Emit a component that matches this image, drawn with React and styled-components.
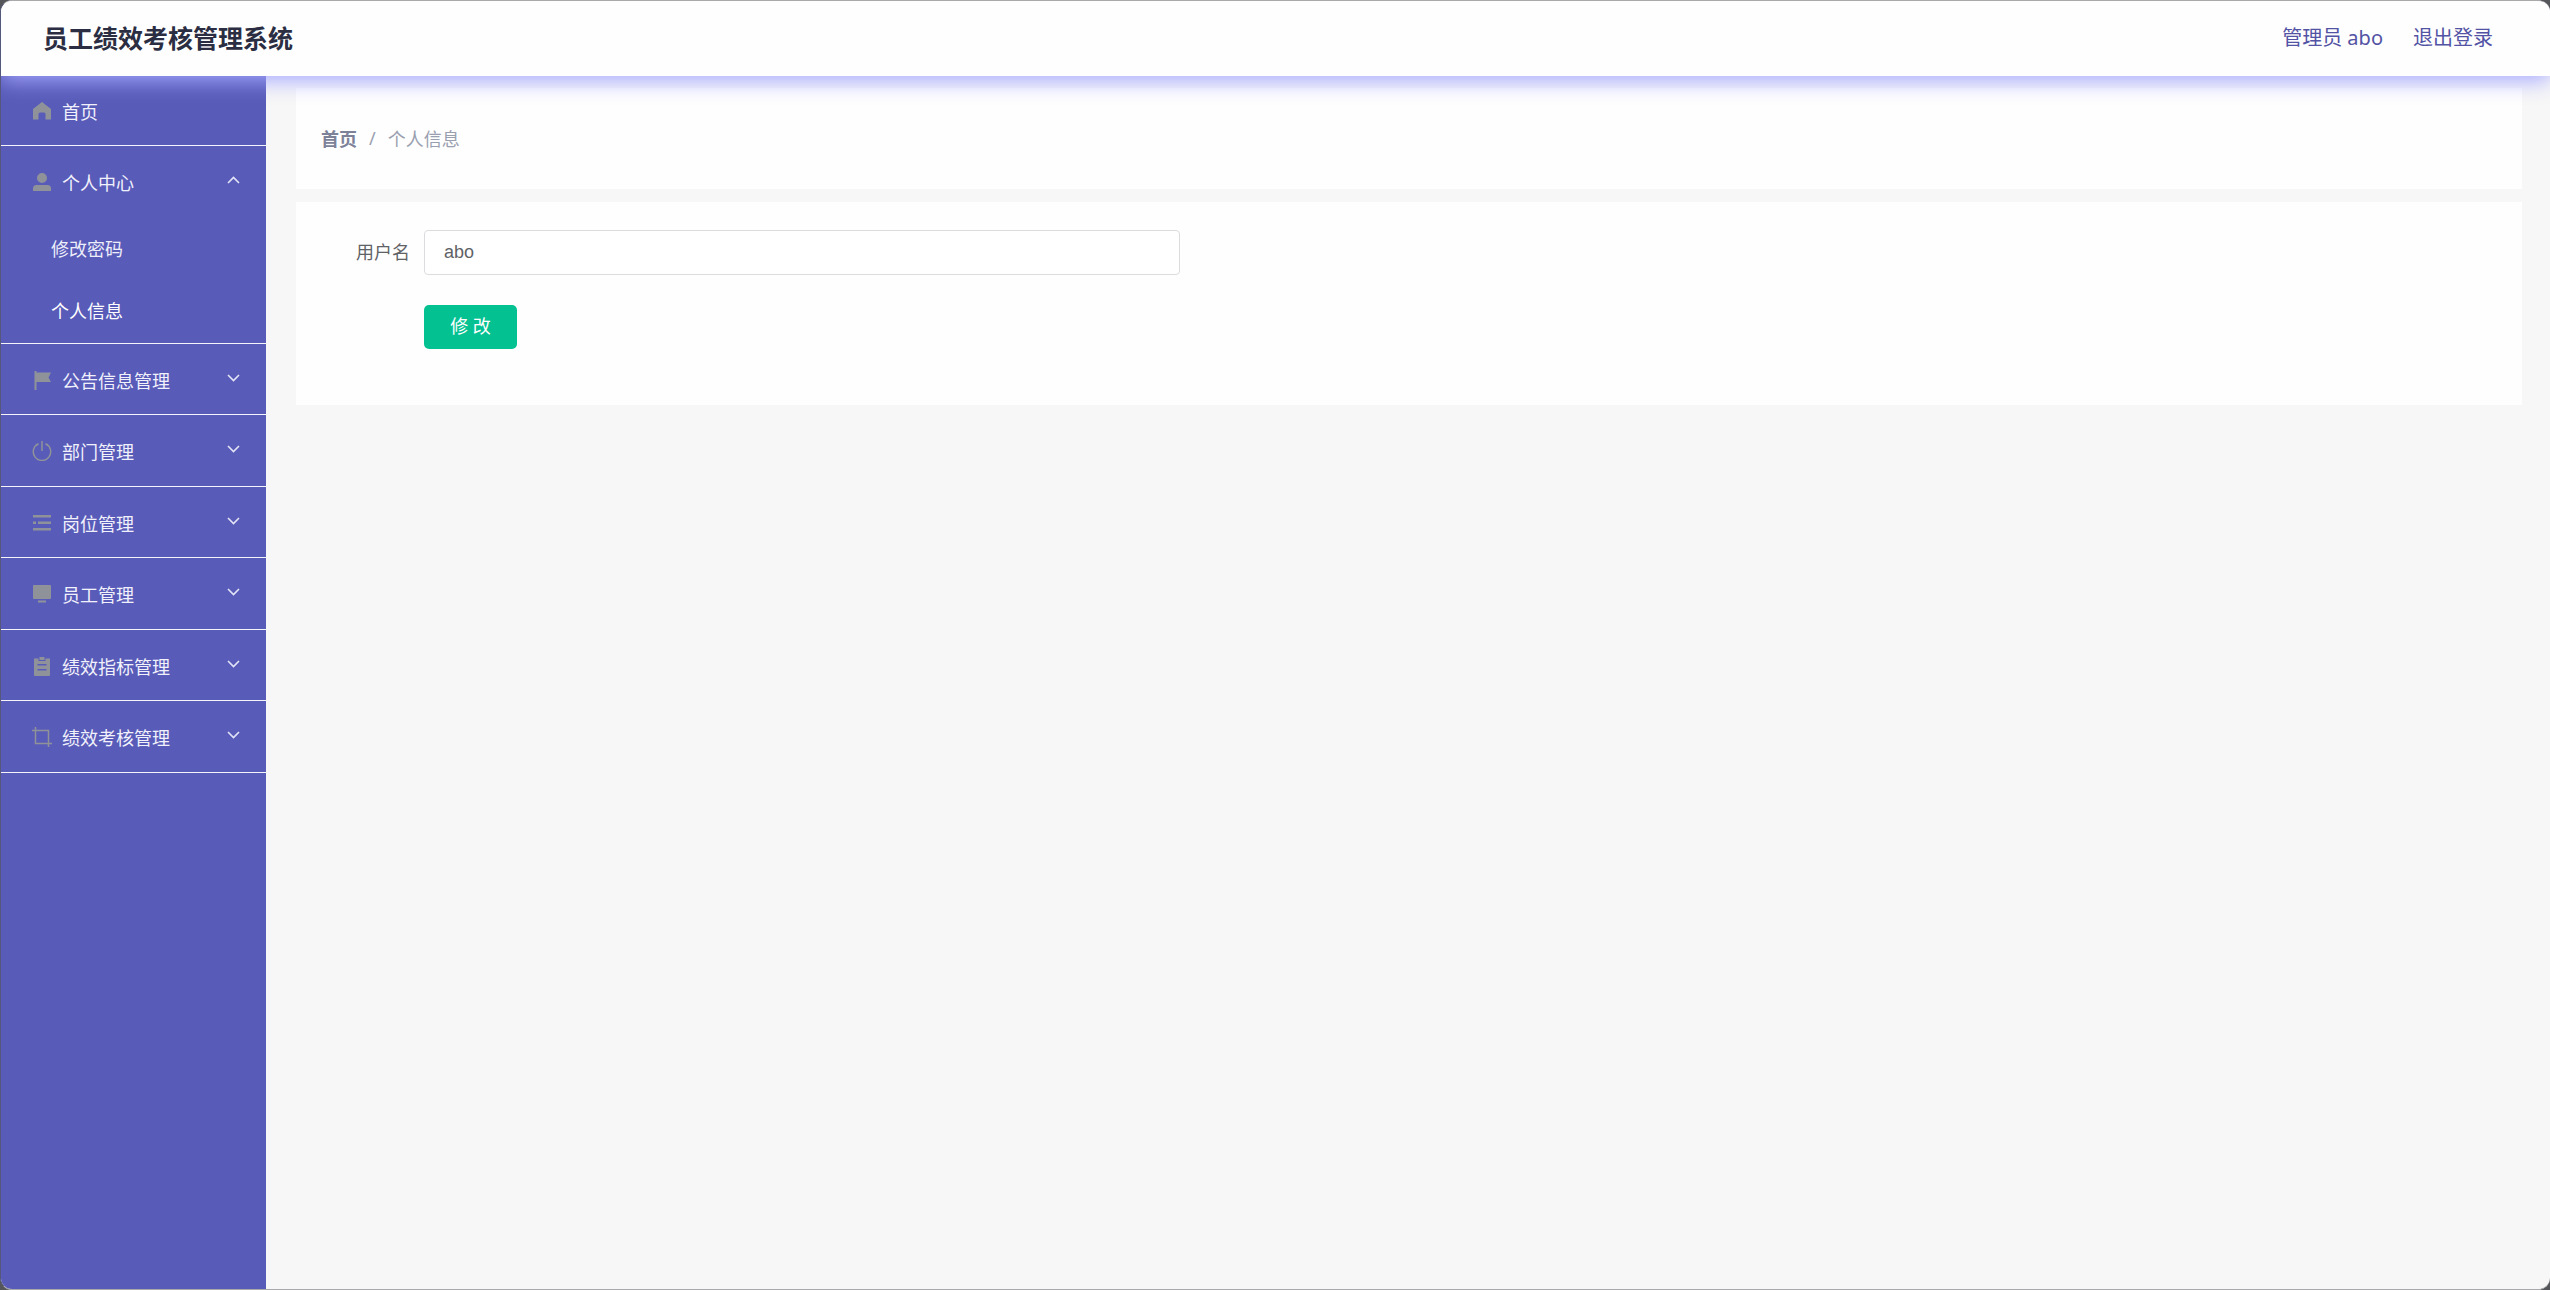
import React, { useState } from 'react';
import styled, { createGlobalStyle } from 'styled-components';

const GlobalStyle = createGlobalStyle`
	* {
		box-sizing: border-box;
	}

	body {
		margin: 0;
		background: #55565a;
		font-family: 'Noto Sans', 'Noto Sans CJK SC', sans-serif;
		font-size: 18px;
		color: #606266;
	}
`;

// Styled Components
const Page = styled.div`
	display: flex;
	flex-direction: column;
	min-height: 100vh;
	border: 1px solid #a9a9ab;
	border-left-color: #55587c;
	border-right: 0;
	border-radius: 12px;
	overflow: hidden;
	background: #f7f7f7;
`;

const Header = styled.header`
	position: relative;
	z-index: 1;
	display: flex;
	align-items: center;
	justify-content: space-between;
	height: 75px;
	padding: 0 57px 1px 42px;
	background: #fefefe;
	box-shadow: 0 5px 20px rgba(165, 168, 255, 0.95);
`;

const Title = styled.h1`
	margin: 0;
	font-size: 25px;
	font-weight: 700;
	line-height: 36px;
	color: #2b2d42;
`;

const UserNav = styled.nav`
	display: flex;
	gap: 30px;
`;

const UserLink = styled.a`
	font-size: 20px;
	line-height: 30px;
	color: #5353a5;
	text-decoration: none;
`;

const Body = styled.div`
	display: flex;
	flex: 1;
`;

const Sidebar = styled.aside`
	flex: none;
	width: 265px;
	background: #585bb8;
`;

const MenuList = styled.ul`
	margin: 0;
	padding: 0;
	list-style: none;
`;

const MenuItem = styled.li`
	border-bottom: 1px solid #f4f4fb;
`;

const MenuButton = styled.button`
	display: flex;
	align-items: center;
	gap: 10px;
	width: 100%;
	height: ${props => props.$height || 70}px;
	padding: 1px 26px 0 31px;
	border: 0;
	background: none;
	font: inherit;
	color: #f1f1fb;
	text-align: left;
	cursor: pointer;
`;

const MenuIcon = styled.svg`
	flex: none;
	width: 20px;
	height: 20px;
	fill: #8f9399;
`;

const MenuLabel = styled.span`
	flex: 1;
`;

const Arrow = styled.svg`
	width: 13px;
	height: 8px;
	margin-bottom: 4px;
	fill: none;
	stroke: #e4e4f7;
	stroke-width: 1.6;
	transform: ${props => (props.$open ? 'rotate(180deg)' : 'none')};
`;

const SubMenu = styled.div`
	padding-bottom: 2px;
`;

const SubLink = styled.a`
	display: flex;
	align-items: center;
	height: 62px;
	padding-left: 50px;
	color: ${props => (props.$active ? '#ffffff' : '#eeeefa')};
	text-decoration: none;
`;

const Content = styled.main`
	flex: 1;
	padding: 12px 28px 12px 30px;
`;

const Panel = styled.section`
	margin-bottom: 13px;
	background: #fefefe;
`;

const Breadcrumb = styled(Panel)`
	display: flex;
	align-items: center;
	gap: 12px;
	height: 101px;
	padding: 0 25px 2px;
	color: #9a9fb0;
`;

const CrumbLink = styled.a`
	font-weight: 700;
	color: #7d8299;
	text-decoration: none;
`;

const Form = styled.form`
	display: flex;
	flex-direction: column;
	gap: 30px;
	padding: 28px 40px 56px 25px;
`;

const Field = styled.div`
	display: flex;
	align-items: center;
`;

const Label = styled.label`
	width: 103px;
	padding: 0 14px 4px 0;
	text-align: right;
`;

const TextInput = styled.input`
	width: 35%;
	height: 45px;
	padding: 0 19px;
	border: 1px solid #dcdcdf;
	border-radius: 4px;
	background: #ffffff;
	font-family: 'Liberation Sans', sans-serif;
	font-size: 18px;
	color: #606266;
`;

const SubmitButton = styled.button`
	width: 93px;
	height: 44px;
	margin-left: 103px;
	padding: 0 0 5px;
	border: 0;
	border-radius: 5px;
	background: #04c192;
	font: inherit;
	color: #ffffff;
	cursor: pointer;
`;

const icons = {
	home: <path d='M10 1 19 8v10.500h-5.500V13a1.500 1.500 0 0 0-1.500-1.500H8A1.500 1.500 0 0 0 6.500 13v5.500H1V8z' />,
	user: <path d='M10 1a5 5 0 1 1 0 10 5 5 0 0 1 0-10zM1 19v-2.500A3.500 3.500 0 0 1 4.500 13h11a3.500 3.500 0 0 1 3.500 3.500V19z' />,
	flag: <path d='M2.500 1h2v1.500H19L16.500 7.500 19 12H4.500v8h-2z' />,
	power: (
		<path
			d='M6.500 2.800a8.700 8.700 0 1 0 7 0M10 0v10'
			fill='none'
			stroke='#8f9399'
			strokeWidth='1.5'
		/>
	),
	list: <path d='M1 2h18v2.500H1zM1 8.500h3v2.500H1zM6 8.500h13v2.500H6zM1 15h18v2.500H1z' />,
	platform: <path d='M2 1h16a1 1 0 0 1 1 1v12a1 1 0 0 1-1 1H2a1 1 0 0 1-1-1V2a1 1 0 0 1 1-1zM6 16.500h8v2H6z' />,
	order: (
		<path
			fillRule='evenodd'
			d='M2 2.500h4.500V5h7V2.500H18V19a1 1 0 0 1-1 1H3a1 1 0 0 1-1-1zM7.500 1h5v3h-5zM5.500 8v1.500h9V8zM5.500 13v1.500h9V13z'
		/>
	),
	crop: <path d='M3.500 0v16.500H20M0 3.500h16.500V20' fill='none' stroke='#8f9399' strokeWidth='1.5' />,
};

const menu = [
	{ label: '首页', icon: 'home', height: 69 },
	{
		label: '个人中心',
		icon: 'user',
		children: ['修改密码', '个人信息'],
		height: 71,
	},
	{ label: '公告信息管理', icon: 'flag', children: [] },
	{ label: '部门管理', icon: 'power', children: [], height: 71 },
	{ label: '岗位管理', icon: 'list', children: [] },
	{ label: '员工管理', icon: 'platform', children: [], height: 71 },
	{ label: '绩效指标管理', icon: 'order', children: [] },
	{ label: '绩效考核管理', icon: 'crop', children: [], height: 71 },
];

const App = () => {
	const [open, setOpen] = useState('个人中心');
	const [username, setUsername] = useState('abo');

	return (
		<Page>
			<GlobalStyle />

			<Header>
				<Title>员工绩效考核管理系统</Title>
				<UserNav>
					<UserLink href='#profile'>管理员 abo</UserLink>
					<UserLink href='#logout'>退出登录</UserLink>
				</UserNav>
			</Header>

			<Body>
				<Sidebar>
					<MenuList>
						{menu.map(item => (
							<MenuItem key={item.label}>
								<MenuButton
									type='button'
									$height={item.height}
									onClick={() => setOpen(open === item.label ? '' : item.label)}
								>
									<MenuIcon viewBox='0 0 20 20'>{icons[item.icon]}</MenuIcon>
									<MenuLabel>{item.label}</MenuLabel>
									{item.children && (
										<Arrow viewBox='0 0 13 8' $open={open === item.label}>
											<path d='M1 1l5.500 5.500L12 1' />
										</Arrow>
									)}
								</MenuButton>
								{open === item.label && item.children && (
									<SubMenu>
										{item.children.map(child => (
											<SubLink key={child} href='#profile' $active={child === '个人信息'}>
												{child}
											</SubLink>
										))}
									</SubMenu>
								)}
							</MenuItem>
						))}
					</MenuList>
				</Sidebar>

				<Content>
					<Breadcrumb as='nav'>
						<CrumbLink href='#home'>首页</CrumbLink>
						<span>/</span>
						<span>个人信息</span>
					</Breadcrumb>

					<Panel>
						<Form onSubmit={e => e.preventDefault()}>
							<Field>
								<Label htmlFor='username'>用户名</Label>
								<TextInput id='username' value={username} onChange={e => setUsername(e.target.value)} />
							</Field>
							<SubmitButton type='submit'>修 改</SubmitButton>
						</Form>
					</Panel>
				</Content>
			</Body>
		</Page>
	);
};

export default App;
